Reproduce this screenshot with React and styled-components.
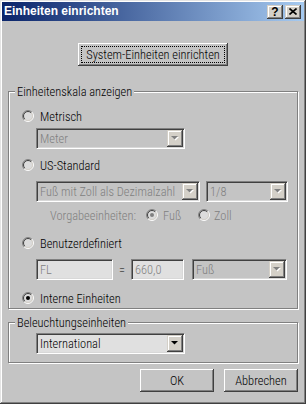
import React from "react";
import styled, { createGlobalStyle } from "styled-components";

const FACE = "#c4c4c4";
const BTNFACE = "#d4d0c8";
const LIGHT = "#e0e0e0";
const GRAY = "#808080";
const DARK = "#404040";

const GlobalStyle = createGlobalStyle`
  html, body { margin: 0; padding: 0; background: ${FACE}; }
  body {
    font-family: "Roboto Condensed", Roboto, "Liberation Sans", sans-serif;
    font-stretch: condensed;
    font-weight: 300;
    font-size: 12.4px;
    line-height: 15px;
    color: #000;
  }
  * { box-sizing: border-box; }
`;

const Window = styled.div`
  width: 306px;
  height: 404px;
  padding: 2px;
  background: ${FACE};
  box-shadow: inset -1px -1px 0 ${DARK}, inset 1px 1px 0 #e4e4e4,
    inset -2px -2px 0 ${GRAY}, inset 2px 2px 0 #fff;
  display: flex;
  flex-direction: column;
  overflow: hidden;
`;

const TitleBar = styled.div`
  height: 19px;
  display: flex;
  align-items: center;
  padding: 0 3px 0 2px;
  background: linear-gradient(to right, #0a246a, #a6caf0);
  color: #fff;
  font: bold 12px/19px "Liberation Sans", Arial, sans-serif;
  font-stretch: normal;
`;

const Title = styled.span`
  flex: 1;
  white-space: nowrap;
`;

const CaptionButtons = styled.div`
  display: flex;
  gap: 2px;
`;

const CaptionButton = styled.div`
  width: 16px;
  height: 14px;
  background: ${BTNFACE};
  color: #000;
  display: flex;
  align-items: center;
  justify-content: center;
  font: bold 12px/12px "Liberation Sans", Arial, sans-serif;
  box-shadow: inset -1px -1px 0 ${DARK}, inset 1px 1px 0 ${BTNFACE},
    inset -2px -2px 0 ${GRAY}, inset 2px 2px 0 #fff;
`;

const Body = styled.div`
  flex: 1;
  display: flex;
  flex-direction: column;
  padding: 22px 6px 0 6px;
`;

const PushButton = styled.div`
  width: ${(p) => p.$w}px;
  height: 23px;
  padding: 3px;
  display: flex;
  background: ${FACE};
  box-shadow: inset -1px -1px 0 ${DARK}, inset 1px 1px 0 #fff,
    inset -2px -2px 0 ${GRAY}, inset 2px 2px 0 ${FACE};
  align-self: ${(p) => p.$align || "auto"};
`;

const ButtonLabel = styled.span`
  flex: 1;
  display: flex;
  align-items: center;
  justify-content: center;
  border: 1px ${(p) => (p.$focus ? "dotted #000" : "solid transparent")};
  white-space: nowrap;
`;

const Group = styled.fieldset`
  margin: ${(p) => p.$mt}px 0 0 0;
  padding: 0;
  min-width: 0;
  width: 290px;
  border: 1px solid ${GRAY};
  box-shadow: inset 1px 1px 0 #fff, 1px 1px 0 #fff;
`;

const Legend = styled.legend`
  margin-left: 6px;
  padding: 0 2px;
  line-height: 15px;
  background: ${FACE};
`;

const GroupBody = styled.div`
  display: flex;
  flex-direction: column;
  padding: ${(p) => p.$pt}px 0 ${(p) => p.$pb}px 13px;
`;

const Row = styled.div`
  display: flex;
  align-items: center;
  height: ${(p) => p.$h || 14}px;
  margin-top: ${(p) => p.$mt || 0}px;
  margin-left: ${(p) => p.$ml || 0}px;
  gap: ${(p) => p.$gap || 0}px;
`;

const RadioLabel = styled.div`
  display: flex;
  align-items: center;
  gap: ${(p) => p.$gap}px;
  width: ${(p) => (p.$w ? `${p.$w}px` : "auto")};
  color: ${(p) => (p.$disabled ? GRAY : "#000")};
  white-space: nowrap;
`;

const Text = styled.span`
  color: ${(p) => (p.$disabled ? GRAY : "#000")};
  width: ${(p) => (p.$w ? `${p.$w}px` : "auto")};
  text-align: ${(p) => p.$align || "left"};
  white-space: nowrap;
`;

const Sunken = styled.div`
  width: ${(p) => p.$w}px;
  height: 21px;
  padding: 1px;
  display: flex;
  border: 1px solid;
  border-color: ${GRAY} #fff #fff ${GRAY};
  box-shadow: inset 1px 1px 0 ${DARK}, inset -1px -1px 0 #d8d8d8;
  background: ${(p) => p.$bg};
`;

const FieldValue = styled.span`
  flex: 1;
  padding-left: 2px;
  line-height: 17px;
  color: ${(p) => (p.$disabled ? GRAY : "#000")};
  white-space: nowrap;
  overflow: hidden;
`;

const DropButton = styled.span`
  width: 16px;
  height: 17px;
  background: ${BTNFACE};
  display: flex;
  align-items: center;
  justify-content: center;
  box-shadow: inset -1px -1px 0 ${DARK}, inset 1px 1px 0 ${BTNFACE},
    inset -2px -2px 0 ${GRAY}, inset 2px 2px 0 #fff;
`;

const ButtonRow = styled.div`
  display: flex;
  justify-content: flex-end;
  gap: 10px;
  margin-top: 6px;
`;

const Arrow = ({ disabled }) => (
  <svg width="8" height="5" viewBox="0 0 8 5">
    {disabled && <path d="M1 1 H8 L4.5 4.5 Z" fill="#fff" />}
    <path d="M0 0 H7 L3.5 3.5 Z" fill={disabled ? GRAY : "#000"} />
  </svg>
);

const RadioSvg = styled.svg`
  flex: none;
`;

const Radio = ({ checked, disabled }) => (
  <RadioSvg width="12" height="12" viewBox="0 0 12 12">
    <circle cx="6" cy="6" r="4.5" fill="#dcdcdc" />
    <path d="M2.111 9.889 A5.5 5.5 0 0 1 9.889 2.111" fill="none" stroke={GRAY} />
    <path d="M9.889 2.111 A5.5 5.5 0 0 1 2.111 9.889" fill="none" stroke="#fff" />
    <path d="M2.818 9.182 A4.5 4.5 0 0 1 9.182 2.818" fill="none" stroke={DARK} />
    <path d="M9.182 2.818 A4.5 4.5 0 0 1 2.818 9.182" fill="none" stroke="#d4d0c8" />
    {checked && <circle cx="6" cy="6" r="2" fill={disabled ? GRAY : "#000"} />}
  </RadioSvg>
);

const Combo = ({ w, value, disabled, bg }) => (
  <Sunken $w={w} $bg={bg}>
    <FieldValue $disabled={disabled}>{value}</FieldValue>
    <DropButton>
      <Arrow disabled={disabled} />
    </DropButton>
  </Sunken>
);

const Edit = ({ w, value }) => (
  <Sunken $w={w} $bg={LIGHT}>
    <FieldValue $disabled>{value}</FieldValue>
  </Sunken>
);

export default function App() {
  return (
    <>
      <GlobalStyle />
      <Window>
        <TitleBar>
          <Title>Einheiten einrichten</Title>
          <CaptionButtons>
            <CaptionButton>?</CaptionButton>
            <CaptionButton>
              <svg width="8" height="7" viewBox="0 0 8 7">
                <path d="M0.5 0.5 L7.5 6.5 M7.5 0.5 L0.5 6.5" stroke="#000" strokeWidth="1.6" />
              </svg>
            </CaptionButton>
          </CaptionButtons>
        </TitleBar>
        <Body>
          <PushButton $w={150} $align="center">
            <ButtonLabel $focus>System-Einheiten einrichten</ButtonLabel>
          </PushButton>

          <Group $mt={18}>
            <Legend>Einheitenskala anzeigen</Legend>
            <GroupBody $pt={10} $pb={3}>
              <Row>
                <RadioLabel $gap={6}>
                  <Radio />
                  Metrisch
                </RadioLabel>
              </Row>
              <Row $h={21} $mt={5} $ml={14}>
                <Combo w={149} value="Meter" disabled bg={FACE} />
              </Row>
              <Row $mt={9}>
                <RadioLabel $gap={6}>
                  <Radio />
                  US-Standard
                </RadioLabel>
              </Row>
              <Row $h={21} $mt={9} $ml={14} $gap={6}>
                <Combo w={164} value="Fuß mit Zoll als Dezimalzahl" disabled bg={FACE} />
                <Combo w={82} value="1/8" disabled bg={FACE} />
              </Row>
              <Row $mt={6} $ml={28}>
                <Text $disabled $w={96}>Vorgabeeinheiten:</Text>
                <RadioLabel $gap={5} $w={52} $disabled>
                  <Radio checked disabled />
                  Fuß
                </RadioLabel>
                <RadioLabel $gap={4} $disabled>
                  <Radio disabled />
                  Zoll
                </RadioLabel>
              </Row>
              <Row $mt={14}>
                <RadioLabel $gap={6}>
                  <Radio />
                  Benutzerdefiniert
                </RadioLabel>
              </Row>
              <Row $h={21} $mt={9} $ml={14}>
                <Edit w={77} value="FL" />
                <Text $w={18} $align="center">=</Text>
                <Edit w={53} value="660,0" />
                <Row $h={21} $ml={8}>
                  <Combo w={95} value="Fuß" disabled bg={FACE} />
                </Row>
              </Row>
              <Row $mt={11}>
                <RadioLabel $gap={6}>
                  <Radio checked />
                  Interne Einheiten
                </RadioLabel>
              </Row>
            </GroupBody>
          </Group>

          <Group $mt={6}>
            <Legend>Beleuchtungseinheiten</Legend>
            <GroupBody $pt={3} $pb={8}>
              <Row $h={21} $ml={14}>
                <Combo w={149} value="International" bg={LIGHT} />
              </Row>
            </GroupBody>
          </Group>

          <ButtonRow>
            <PushButton $w={74}>
              <ButtonLabel>OK</ButtonLabel>
            </PushButton>
            <PushButton $w={74}>
              <ButtonLabel>Abbrechen</ButtonLabel>
            </PushButton>
          </ButtonRow>
        </Body>
      </Window>
    </>
  );
}
